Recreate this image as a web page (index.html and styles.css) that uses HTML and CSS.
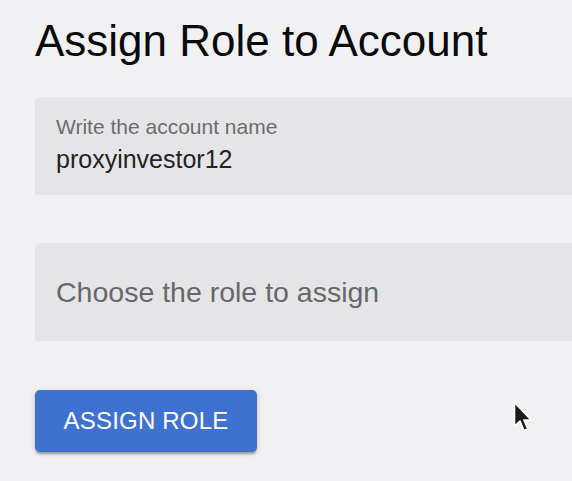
FILE: index.html
```html
<!DOCTYPE html>
<html lang="en">
<head>
<meta charset="utf-8">
<title>Assign Role to Account</title>
<link rel="stylesheet" href="styles.css">
</head>
<body>
<main class="page">
  <h1 class="title">Assign Role to Account</h1>
  <div class="field field-filled">
    <span class="field-label">Write the account name</span>
    <span class="field-value">proxyinvestor12</span>
  </div>
  <div class="field field-empty">
    <span class="field-placeholder">Choose the role to assign</span>
  </div>
  <button class="btn" type="button">ASSIGN ROLE</button>
</main>
<svg class="cursor" width="21" height="32" viewBox="0 0 21 32" aria-hidden="true">
  <path d="M1.5 1.5 L1.5 25 L7 20 L11 29.5 L14.8 28 L10.8 19 L18 19 Z" fill="#1a1a1a" stroke="#ffffff" stroke-width="1.6" stroke-linejoin="round"/>
</svg>
</body>
</html>
```
FILE: styles.css
```css
html, body {
  margin: 0;
  padding: 0;
  overflow: hidden;
  background: #f1f1f3;
}
body {
  font-family: "Liberation Sans", Arial, sans-serif;
  width: 572px;
  height: 481px;
  position: relative;
}
.page {
  padding: 15px 0 0 35px;
  display: flex;
  flex-direction: column;
  align-items: flex-start;
}
.title {
  margin: 0;
  font-size: 44px;
  line-height: 52px;
  font-weight: 400;
  color: #0a0a0a;
}
.field {
  box-sizing: border-box;
  align-self: stretch;
  height: 98px;
  background: #e5e5e7;
  border-radius: 5px 0 0 0;
  padding-left: 21px;
  display: flex;
  flex-direction: column;
}
.field-filled {
  margin-top: 30px;
  padding-top: 18px;
}
.field-empty {
  margin-top: 48px;
  justify-content: center;
}
.field-label {
  font-size: 21px;
  line-height: 24px;
  color: #6c6c6e;
}
.field-value {
  margin-top: 6px;
  font-size: 25px;
  line-height: 28px;
  color: #232325;
}
.field-placeholder {
  font-size: 28.5px;
  line-height: 34px;
  color: #68686a;
}
.btn {
  margin-top: 49px;
  width: 222px;
  height: 62px;
  border: 0;
  border-radius: 5px;
  background: #3f72d0;
  color: #fff;
  font-family: "Liberation Sans", Arial, sans-serif;
  font-size: 24px;
  letter-spacing: 0.2px;
  padding: 0;
  box-shadow: 0 3px 2px -1px rgba(0,0,0,0.2), 0 2px 3px 0 rgba(0,0,0,0.14), 0 1px 6px 0 rgba(0,0,0,0.12);
}
.cursor {
  position: absolute;
  left: 513px;
  top: 401px;
}
```
